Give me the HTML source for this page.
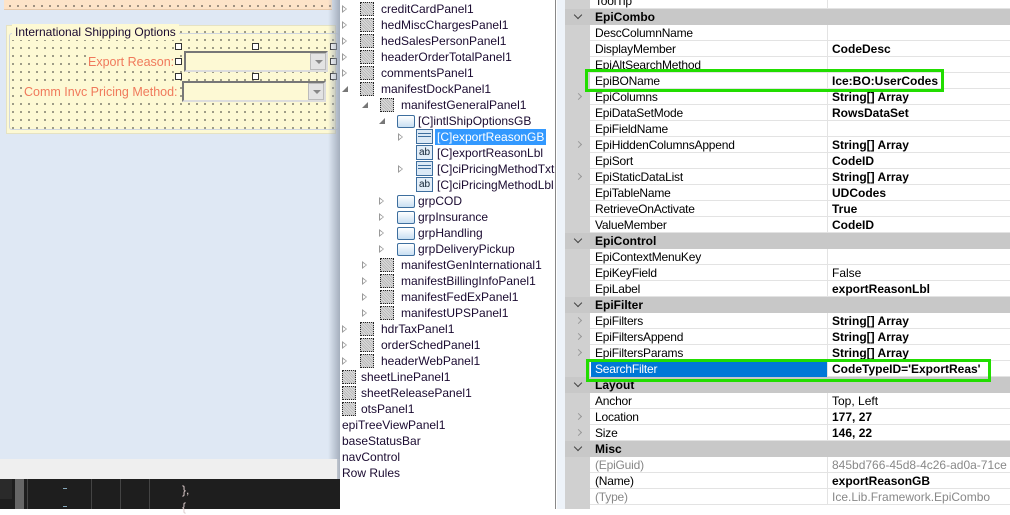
<!DOCTYPE html>
<html><head><meta charset="utf-8"><style>
*{margin:0;padding:0;box-sizing:border-box}
body{width:1010px;height:509px;overflow:hidden;position:relative;font-family:"Liberation Sans",sans-serif;font-size:12px;background:#fff}
.a{position:absolute}
.dots{background-image:radial-gradient(circle,#222 0.6px,transparent 0.9px);background-size:8px 8px;background-position:2px 2px}
.t{position:absolute;white-space:nowrap;color:#000;font-size:12px;line-height:16px}
.tri{position:absolute;width:0;height:0;border-left:5px solid #999;border-top:4px solid transparent;border-bottom:4px solid transparent}
.tri:after{content:"";position:absolute;left:-4px;top:-2.5px;border-left:3px solid #fff;border-top:2.5px solid transparent;border-bottom:2.5px solid transparent}
.dn{position:absolute;width:0;height:0;border-right:6px solid #777;border-top:6px solid transparent}
.pan{position:absolute;width:14px;height:14px;border:1px dotted #222;background:#ccc;background-image:repeating-linear-gradient(45deg,#bbb 0 1px,#ddd 1px 2px)}
.gb{position:absolute;width:18px;height:13px;border:1px solid #3d6e9e;border-radius:2px;background:linear-gradient(#fff,#c9dff2)}
.cb{position:absolute;width:17px;height:15px;border:1px solid #3d6e9e;background:#dbe9f6}
.cb:before{content:"";position:absolute;left:1px;right:1px;top:3px;height:2px;border-top:1px solid #3d6e9e;border-bottom:1px solid #3d6e9e}
.ab{position:absolute;width:17px;height:15px;border:1px solid #3d6e9e;background:#e3eef8;font-size:10px;line-height:13px;text-align:center;color:#123}
.r{position:absolute;left:590px;width:420px;height:16px;border-bottom:1px solid #e3e3e3;background:#fff}
.r .n{position:absolute;left:5px;top:1px;font-size:12px;color:#000;white-space:nowrap;letter-spacing:-0.2px}
.r .v{position:absolute;left:237px;top:0;height:16px;width:190px;border-left:1px solid #e3e3e3;padding-left:4px;font-size:12px;line-height:16px;white-space:nowrap}
.r .v b{font-weight:bold}
.h{position:absolute;left:565px;width:445px;height:16px;background:#c8c8c8}
.h span{position:absolute;left:30px;top:1px;font-weight:bold;font-size:12px}
.h i{position:absolute;left:10px;top:3px;width:6px;height:6px;border-right:1.5px solid #444;border-bottom:1.5px solid #444;transform:rotate(45deg)}
.gt{position:absolute;left:10px;width:5px;height:5px;border-right:1.5px solid #999;border-top:1.5px solid #999;transform:rotate(45deg)}
.hd{position:absolute;width:7px;height:7px;border:1px solid #333;background:#fff}
</style></head><body>
<div class="a" style="left:0;top:0;width:340px;height:459px;background:#dfe8f4"></div>
<div class="a dots" style="left:4px;top:0;width:328px;height:10px;background-color:#fde3c8;border-bottom:1px solid #e7c9aa"></div>
<div class="a dots" style="left:6px;top:25px;width:330px;height:109px;background-color:#fdf9d4;border:1px solid #e5e2c3"></div>
<div class="a" style="left:9px;top:33px;width:330px;height:97px;border:1px solid #cfd6de;border-right:none;border-radius:3px"></div>
<div class="t" style="left:12px;top:24px;background:#fdf9d4;padding:0 3px;color:#1a0a30">International Shipping Options</div>
<div class="t" style="left:88px;top:54px;background:#fdf9d4;color:#f07a5c;font-size:12.5px">Export Reason:</div>
<div class="t" style="left:24px;top:84px;background:#fdf9d4;color:#f07a5c;font-size:12.5px">Comm Invc Pricing Method:</div>
<div class="a" style="left:184px;top:51px;width:144px;height:21px;background:#fdf9d4;border:2px solid #777;border-right-color:#ddd;border-bottom-color:#ddd"></div>
<div class="a" style="left:310px;top:53px;width:16px;height:17px;background:#e3e3e3;border:1px solid #bbb"><div class="a" style="left:4px;top:6px;border-top:4px solid #888;border-left:4px solid transparent;border-right:4px solid transparent"></div></div>
<div class="a" style="left:182px;top:81px;width:144px;height:21px;background:#fdf9d4;border:2px solid #777;border-right-color:#ddd;border-bottom-color:#ddd"></div>
<div class="a" style="left:308px;top:83px;width:16px;height:17px;background:#e3e3e3;border:1px solid #bbb"><div class="a" style="left:4px;top:6px;border-top:4px solid #888;border-left:4px solid transparent;border-right:4px solid transparent"></div></div>
<div class="hd" style="left:175px;top:43px"></div><div class="hd" style="left:252px;top:43px"></div><div class="hd" style="left:330px;top:43px"></div>
<div class="hd" style="left:175px;top:58px"></div><div class="hd" style="left:330px;top:58px"></div>
<div class="hd" style="left:175px;top:73px"></div><div class="hd" style="left:252px;top:73px"></div><div class="hd" style="left:330px;top:73px"></div>
<div class="a" style="left:328px;top:0;width:12px;height:479px;background:linear-gradient(90deg,rgba(160,170,185,0),rgba(150,160,175,.8))"></div>
<div class="a" style="left:0;top:459px;width:337px;height:20px;background:#efefef"></div>
<div class="a" style="left:0;top:479px;width:340px;height:30px;background:#1e1e1e"></div>
<div class="a" style="left:0;top:479px;width:12px;height:20px;background:#2a2a2a"></div>
<div class="a" style="left:15px;top:479px;width:9px;height:30px;background:#666"></div>
<div class="a" style="left:27px;top:479px;width:1px;height:30px;background:#444"></div>
<div class="a" style="left:91px;top:479px;width:1px;height:30px;background:#444"></div>
<div class="a" style="left:120px;top:479px;width:1px;height:30px;background:#444"></div>
<div class="a" style="left:149px;top:479px;width:1px;height:30px;background:#444"></div>
<div class="a" style="left:63px;top:488px;width:4px;height:1px;background:#8ab"></div>
<div class="a" style="left:63px;top:506px;width:4px;height:1px;background:#8ab"></div>
<div class="t" style="left:182px;top:482px;color:#dcc;font-size:12px">},</div>
<div class="t" style="left:182px;top:499px;color:#dcc;font-size:12px">{</div>
<div class="a" style="left:340px;top:0;width:216px;height:509px;background:#fff;border-right:1px solid #888"></div>
<div class="a" style="left:557px;top:0;width:8px;height:509px;background:#eef3f9"></div>
<div id="tree"></div>
<div class="a" style="left:565px;top:0;width:25px;height:509px;background:#d0d0d0"></div>
<div id="grid"></div>
<div class="a" style="left:585px;top:69px;width:359px;height:23px;border:3px solid #22dd00"></div>
<div class="a" style="left:586px;top:359px;width:405px;height:23px;border:3px solid #22dd00"></div>
<script>
var T=[["creditCardPanel1",0,1,'p'],["hedMiscChargesPanel1",0,1,'p'],["hedSalesPersonPanel1",0,1,'p'],["headerOrderTotalPanel1",0,1,'p'],["commentsPanel1",0,1,'p'],["manifestDockPanel1",0,2,'p'],["manifestGeneralPanel1",1,2,'p'],["[C]intlShipOptionsGB",2,2,'g'],["[C]exportReasonGB",3,1,'c'],["[C]exportReasonLbl",3,0,'a'],["[C]ciPricingMethodTxt",3,1,'c'],["[C]ciPricingMethodLbl",3,0,'a'],["grpCOD",2,1,'g'],["grpInsurance",2,1,'g'],["grpHandling",2,1,'g'],["grpDeliveryPickup",2,1,'g'],["manifestGenInternational1",1,1,'p'],["manifestBillingInfoPanel1",1,1,'p'],["manifestFedExPanel1",1,1,'p'],["manifestUPSPanel1",1,1,'p'],["hdrTaxPanel1",0,1,'p'],["orderSchedPanel1",0,1,'p'],["headerWebPanel1",0,1,'p'],["sheetLinePanel1",-1,0,'p'],["sheetReleasePanel1",-1,0,'p'],["otsPanel1",-1,0,'p'],["epiTreeViewPanel1",-2,0,''],["baseStatusBar",-2,0,''],["navControl",-2,0,''],[" Row Rules",-2,0,'']];
var h='';T.forEach(function(e,i){var y=1+16*i,L=e[1],x=[342,360,380,397,416][L+1];
if(L==-2){h+='<div class="t" style="left:342px;top:'+y+'px;color:#1a0a30">'+e[0]+'</div>';return}
var tx=x-18;if(e[2]==1)h+='<div class="tri" style="left:'+(tx)+'px;top:'+(y+4)+'px"></div>';
if(e[2]==2)h+='<div class="dn" style="left:'+(tx)+'px;top:'+(y+5)+'px"></div>';
var ic=e[3];if(ic=='p')h+='<div class="pan" style="left:'+x+'px;top:'+(y+1)+'px"></div>';
if(ic=='g')h+='<div class="gb" style="left:'+x+'px;top:'+(y+2)+'px"></div>';
if(ic=='c')h+='<div class="cb" style="left:'+x+'px;top:'+(y)+'px"></div>';
if(ic=='a')h+='<div class="ab" style="left:'+x+'px;top:'+(y)+'px">ab</div>';
var sel=i==8;h+='<div class="t" style="left:'+(x+(L==-1?19:21))+'px;top:'+y+'px;color:'+(sel?'#fff':'#1a0a30')+';'+(sel?'background:#3399ff;padding:0 2px;margin-left:-2px;':'')+'">'+e[0]+'</div>';});
document.getElementById('tree').innerHTML=h;
var G=[["ToolTip","",0],["#EpiCombo"],["DescColumnName","",0],["DisplayMember","<b>CodeDesc</b>",0],["EpiAltSearchMethod","",0],["EpiBOName","<b>Ice:BO:UserCodes</b>",0],["EpiColumns","<b>String[] Array</b>",1],["EpiDataSetMode","<b>RowsDataSet</b>",0],["EpiFieldName","",0],["EpiHiddenColumnsAppend","<b>String[] Array</b>",1],["EpiSort","<b>CodeID</b>",0],["EpiStaticDataList","<b>String[] Array</b>",1],["EpiTableName","<b>UDCodes</b>",0],["RetrieveOnActivate","<b>True</b>",0],["ValueMember","<b>CodeID</b>",0],["#EpiControl"],["EpiContextMenuKey","",0],["EpiKeyField","False",0],["EpiLabel","<b>exportReasonLbl</b>",0],["#EpiFilter"],["EpiFilters","<b>String[] Array</b>",1],["EpiFiltersAppend","<b>String[] Array</b>",1],["EpiFiltersParams","<b>String[] Array</b>",1],["SearchFilter","<b>CodeTypeID='ExportReas'</b>",0,1],["#Layout"],["Anchor","Top, Left",0],["Location","<b>177, 27</b>",1],["Size","<b>146, 22</b>",1],["#Misc"],["(EpiGuid)","<span style='color:#888'>845bd766-45d8-4c26-ad0a-71ce</span>",0,2],["(Name)","<b>exportReasonGB</b>",0],["(Type)","<span style='color:#888'>Ice.Lib.Framework.EpiCombo</span>",0,2]];
var g='';G.forEach(function(e,i){var y=-7+16*i;
if(e[0][0]=='#'){g+='<div class="h" style="top:'+y+'px"><i></i><span>'+e[0].slice(1)+'</span></div>';return}
var s=e[3]==1,gr=e[3]==2;
if(e[2])g+='<div class="gt" style="left:576px;top:'+(y+5)+'px;position:absolute"></div>';
g+='<div class="r" style="top:'+y+'px"><div class="n" style="'+(s?'background:#0078d7;color:#fff;left:1px;padding-left:4px;width:236px;top:0;height:16px;line-height:16px;':'')+(gr?'color:#888;':'')+'">'+e[0]+'</div><div class="v">'+e[1]+'</div></div>';});
document.getElementById('grid').innerHTML=g;
</script>
</body></html>
